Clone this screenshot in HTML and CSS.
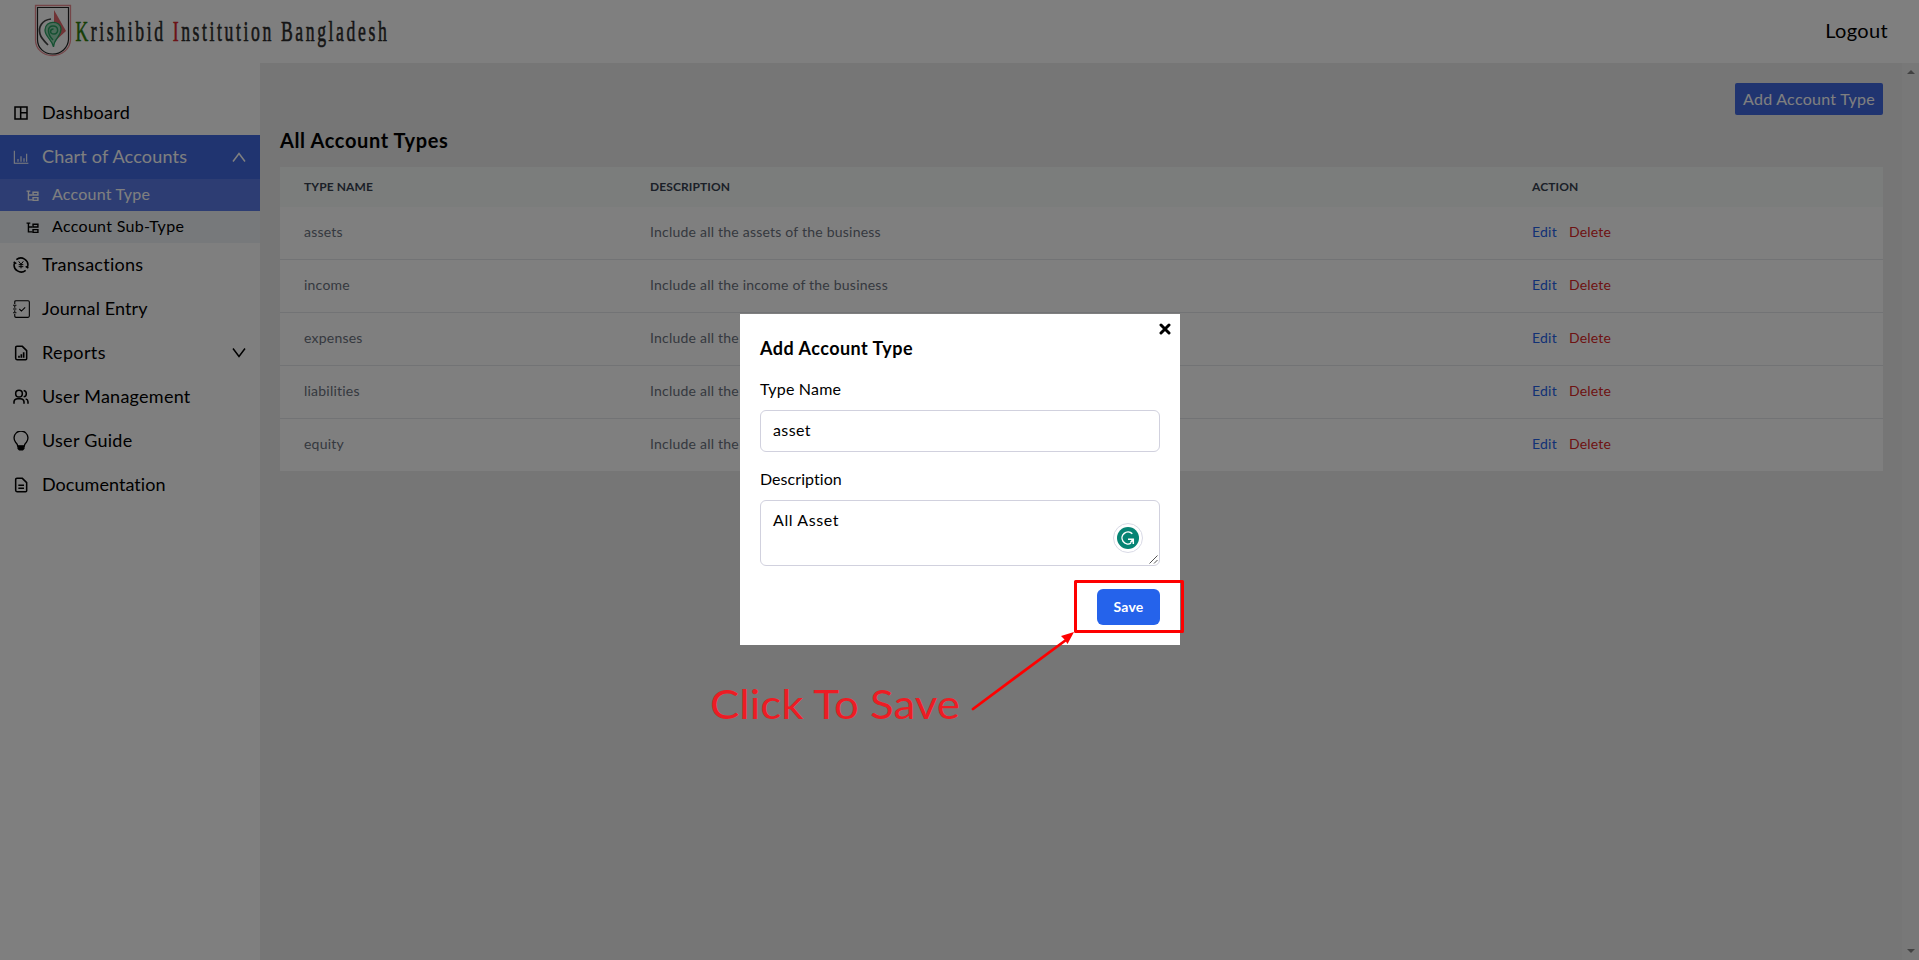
FILE: index.html
```html
<!DOCTYPE html>
<html lang="en">
<head>
<meta charset="utf-8">
<title>Krishibid Institution Bangladesh</title>
<link rel="stylesheet" href="styles.css">
</head>
<body>
<div class="app">
  <header class="topbar">
    <svg class="logo" width="360" height="63" viewBox="0 0 360 63">
      <path d="M1.500 5.500H36.500V40C36 49 28 55.500 18.500 55.500S1.500 49 1.500 40Z" fill="#fff" stroke="#e88a90" stroke-width="1.300"/>
      <path d="M3.500 7.500H34.500V39.500C34 48 27 54 18.500 54S3.500 48 3.500 39.500Z" fill="#fff" stroke="#222" stroke-width="1.200"/>
      <path d="M20 10L32 31L20 42Z" fill="#e0666a"/>
      <path d="M17 19C8 20 4 27 6 34C7 38 11 42 14 45" fill="none" stroke="#444" stroke-width="1.700"/>
      <path d="M19.500 47C18 39 11 37 11 30C11 20 27 20 27 29C27 37 20 38 19.500 47Z" fill="#9ad6b4" stroke="#2aa163" stroke-width="1.300"/>
      <path d="M19 40C13 34 13 26 19 26S25 34 20 34S16 29 19.500 29" fill="none" stroke="#2aa163" stroke-width="1.500"/>
      <text transform="translate(41.500 40.500) scale(.62 1)" x="0" y="0" class="logo-text" textLength="502" lengthAdjust="spacing"><tspan class="k">K</tspan>rishibid <tspan class="i">I</tspan>nstitution Bangladesh</text>
    </svg>
    <a class="logout">Logout</a>
  </header>
  <div class="body">
    <nav class="sidebar">
      <a class="item"><svg class="ico" viewBox="0 0 24 24"><path d="M3 3h18v18H3zM11.500 3v18M11.500 11.500H21"/></svg><span class="t-dash">Dashboard</span></a>
      <a class="item active"><svg class="ico thin" viewBox="0 0 24 24"><path d="M2 2.500V21.500H23M7.500 19v-4M12 19v-8M16.500 19v-5M20.500 19V7"/></svg><span class="t-chart">Chart of Accounts</span><svg class="chev" viewBox="0 0 14 10"><path d="M1 9.500L7 1.500L13 9.500"/></svg></a>
      <a class="sub on"><svg class="tree" viewBox="0 0 24 24"><path d="M1 4H8M4.500 4V20H12M4.500 11H12"/><path d="M13 6h9v5h-9zM13 16h9v5h-9z"/></svg><span class="t-type">Account Type</span></a>
      <a class="sub"><svg class="tree" viewBox="0 0 24 24"><path d="M1 4H8M4.500 4V20H12M4.500 11H12"/><path d="M13 6h9v5h-9zM13 16h9v5h-9z"/></svg><span class="t-sub">Account Sub-Type</span></a>
      <a class="item"><svg class="ico" viewBox="0 0 24 24"><path d="M5 4A10.500 10.500 0 0 1 22 14.500M19 20A10.500 10.500 0 0 1 2 9.500M23 16.500l-4-2.500M1 7.500l4 2.500"/><path d="M8.500 6.500L12 11l3.500-4.500M12 11v6M8.500 11.500h7M8.500 14.500h7" stroke-width="1.500"/></svg><span class="t-trans">Transactions</span></a>
      <a class="item"><svg class="ico big" viewBox="0 0 24 24"><path d="M4.500 6V3.500Q4.500 2 6 2H20.500Q22 2 22 3.500V20.500Q22 22 20.500 22H6Q4.500 22 4.500 20.500V18M4.500 8.500v2M4.500 13.500v2M2.500 7.500h4M2.500 12h4M2.500 16.500h4M10 12l2.500 2.500L17 10"/></svg><span class="t-journal">Journal Entry</span></a>
      <a class="item"><svg class="ico" viewBox="0 0 24 24"><path d="M6 2H14L20.500 8.500V20.500Q20.500 22 19 22H6Q4 22 4 20V4Q4 2 6 2Z"/><path d="M9 19v-3M12.500 19v-5M16 19v-8" stroke-width="2.500"/></svg><span class="t-reports">Reports</span><svg class="chev" viewBox="0 0 14 10"><path d="M1 .5L7 8.500L13 .5"/></svg></a>
      <a class="item"><svg class="ico" viewBox="0 0 24 24"><circle cx="9" cy="7" r="5"/><path d="M1.500 22V19Q2 14.500 7 14.500H11Q16 14.500 16.500 19V22M16 2.200Q20 3 20 7T16 11.800M19 14.800Q22.500 16 22.500 19V22"/></svg><span class="t-users">User Management</span></a>
      <a class="item"><svg class="ico big thin" viewBox="0 0 24 24"><path d="M8 18Q8 16 5.500 13.500A8.300 8.300 0 1 1 18.500 13.500Q16 16 16 18Z"/><path d="M8.500 18.500H15.500V21L14 22.500H10L8.500 21Z" fill="currentColor"/></svg><span class="t-guide">User Guide</span></a>
      <a class="item"><svg class="ico" viewBox="0 0 24 24"><path d="M6 2H14L20.500 8.500V20.500Q20.500 22 19 22H6Q4 22 4 20V4Q4 2 6 2ZM8 12.500h8.500M8 17h8.500"/></svg><span class="t-doc">Documentation</span></a>
    </nav>
    <main class="content">
      <div class="actions"><button class="add">Add Account Type</button></div>
      <h1 class="heading">All Account Types</h1>
      <div class="table">
        <div class="row head"><span>TYPE NAME</span><span>DESCRIPTION</span><span>ACTION</span></div>
        <div class="row"><span>assets</span><span>Include all the assets of the business</span><span class="links"><a class="edit">Edit</a><a class="del">Delete</a></span></div>
        <div class="row"><span>income</span><span>Include all the income of the business</span><span class="links"><a class="edit">Edit</a><a class="del">Delete</a></span></div>
        <div class="row"><span>expenses</span><span>Include all the</span><span class="links"><a class="edit">Edit</a><a class="del">Delete</a></span></div>
        <div class="row"><span>liabilities</span><span>Include all the</span><span class="links"><a class="edit">Edit</a><a class="del">Delete</a></span></div>
        <div class="row"><span>equity</span><span>Include all the</span><span class="links"><a class="edit">Edit</a><a class="del">Delete</a></span></div>
      </div>
    </main>
    <div class="scroll"><i class="up"></i><i class="down"></i></div>
  </div>
</div>
<div class="overlay">
  <section class="modal">
    <svg class="close" viewBox="0 0 12 12"><path d="M2 2L10 10M10 2L2 10"/></svg>
    <h2 class="modal-title">Add Account Type</h2>
    <label class="label l-name">Type Name</label>
    <div class="field"><span>asset</span></div>
    <label class="label l-desc">Description</label>
    <div class="field area"><span>All Asset</span>
      <svg class="gram" viewBox="0 0 30 30"><circle cx="15" cy="15" r="14.500" fill="#fff" stroke="#d9dae6"/><circle cx="15" cy="15" r="11" fill="#068474"/><path d="M19.300 10.800A6 6 0 1 0 18 20.200M15 16.300H20.300V21M20.300 16.300L17.500 19.500" fill="none" stroke="#fff" stroke-width="1.500"/></svg>
      <svg class="grip" viewBox="0 0 9 9"><path d="M.5 8.500L8.500 .5M5 8.500L8.500 5"/></svg>
    </div>
    <div class="foot"><button class="save">Save</button></div>
  </section>
</div>
<svg class="note" width="1919" height="960" viewBox="0 0 1919 960">
  <rect x="1075.500" y="581.500" width="107" height="50" fill="none" stroke="#fe0000" stroke-width="3" stroke-linejoin="round"/>
  <path d="M973 709L1066 640" stroke="#fe0000" stroke-width="2.800" stroke-linecap="round"/>
  <path d="M1074 632L1067.500 644L1065 640L1061 636Z" fill="#fe0000"/>
  <text x="710" y="718.500" class="note-text" textLength="250" lengthAdjust="spacingAndGlyphs">Click To Save</text>
</svg>
</body>
</html>
```
FILE: styles.css
```css
* { box-sizing: border-box; }
body { margin: 0; overflow: hidden; font-family: Lato, "Open Sans", sans-serif; color: #000; font-variant-ligatures: none; }
.app { display: flex; flex-direction: column; height: 960px; background: #ececec; }
.topbar { display: flex; align-items: center; justify-content: space-between; height: 63px; padding: 0 31px 0 34px; background: #fff; flex: none; }
.logo { display: block; }
.logo-text { font: 28.500px "Liberation Serif", serif; fill: #2b2b2b; stroke: #2b2b2b; stroke-width: .6px; }
.k { fill: #2f7d0c; stroke: #2f7d0c; }
.i { fill: #d8262e; stroke: #d8262e; }
.logout { font-size: 20px; letter-spacing: .35px; padding-bottom: 4px; }
.body { display: flex; flex: 1; }
.sidebar { width: 260px; background: #fff; padding-top: 28px; flex: none; }
.item { display: flex; align-items: center; height: 44px; padding: 0 14px 0 12px; font-size: 18px; }
.item span { margin-left: 12px; flex: 1; white-space: nowrap; padding-bottom: 2px; letter-spacing: .26px; }
.item .t-journal { letter-spacing: .1px; }
.item .t-reports { letter-spacing: .36px; }
.item .t-doc { letter-spacing: .05px; }
.item .t-chart { letter-spacing: .2px; }
.ico, .tree, .chev, .close, .grip { fill: none; stroke: currentColor; stroke-width: 2.3; flex: none; }
.ico { width: 16px; height: 16px; margin: 0 1px; }
.ico.big { width: 20px; height: 20px; margin: 0 -1px; stroke-width: 1.3; }
.ico.thin { stroke-width: 1.6; }
.chev { width: 14px; height: 10px; stroke-width: 1.5; }
.active { background: #4169e1; color: #fff; }
.sub { display: flex; align-items: center; height: 32px; padding-left: 26px; font-size: 16px; background: #eff3f6; }
.sub.on { background: #5a7ae7; color: #fff; }
.sub span { margin-left: 14px; padding-bottom: 3px; letter-spacing: .22px; }
.sub .t-sub { letter-spacing: .3px; }
.tree { width: 13px; height: 13px; margin-right: -1px; stroke-width: 2.6; }
.content { flex: 1; padding: 20px 19px 0 20px; }
.actions { display: flex; justify-content: flex-end; }
button { font-family: inherit; border: 0; color: #fff; padding: 0; }
.add { width: 148px; height: 32px; padding-bottom: 2px; border-radius: 2px; background: #4169e1; font-size: 16px; letter-spacing: .27px; white-space: nowrap; }
.heading { margin: 10px 0 12px; font-size: 20px; line-height: 30px; font-weight: 700; letter-spacing: .62px; }
.table { background: #fff; }
.row { display: grid; grid-template-columns: 346px 882px 1fr; align-items: center; height: 53px; padding: 0 0 3px 24px; border-bottom: 1px solid #e5e7eb; font-size: 14px; color: #6b7280; letter-spacing: .22px; }
.row:last-child { border-bottom: 0; height: 52px; padding-bottom: 3px; }
.row.head { height: 40px; padding-bottom: 2px; border: 0; background: #f7fbf8; color: #374151; font-size: 12px; font-weight: 700; letter-spacing: .1px; }
.links { display: flex; gap: 12px; }
.edit { color: #2563eb; }
.del { color: #dc2626; }
.scroll { width: 17px; background: #f1f1f1; display: flex; flex-direction: column; justify-content: space-between; align-items: center; padding: 7px 0 7px; }
.up, .down { border: 4px solid transparent; }
.up { border-top: 0; border-bottom-color: #858585; }
.down { border-bottom: 0; border-top-color: #858585; }
.overlay { position: absolute; inset: 0; background: rgba(0, 0, 0, .5); padding: 314px 0 0 740px; }
.modal { position: relative; width: 440px; height: 331px; background: #fff; padding: 20px; }
.close { position: absolute; right: 9px; top: 9px; width: 12px; height: 12px; stroke-width: 3; stroke-linecap: round; }
.modal-title { margin: 0 0 13px; font-size: 18px; line-height: 28px; font-weight: 700; letter-spacing: .48px; }
.label { display: block; font-size: 16px; line-height: 28px; margin-bottom: 7px; letter-spacing: .2px; }
.l-desc { letter-spacing: .05px; }
.field { position: relative; height: 42px; padding: 7px 12px; border: 1px solid #d1d1de; border-radius: 6px; font-size: 16px; line-height: 24px; margin-bottom: 13px; letter-spacing: .4px; }
.area { height: 66px; margin-bottom: 23px; letter-spacing: .6px; }
.gram { position: absolute; left: 352px; top: 22px; width: 30px; height: 30px; }
.grip { position: absolute; right: 1px; bottom: 1px; width: 9px; height: 9px; stroke: #555; stroke-width: 1; }
.foot { display: flex; justify-content: flex-end; }
.save { width: 63px; height: 36px; padding-bottom: 2px; border-radius: 6px; background: #2563eb; font-size: 14px; font-weight: 700; letter-spacing: .2px; }
.note { position: absolute; left: 0; top: 0; }
.note-text { font: 41.500px Lato, sans-serif; fill: #ed1c24; }
```
